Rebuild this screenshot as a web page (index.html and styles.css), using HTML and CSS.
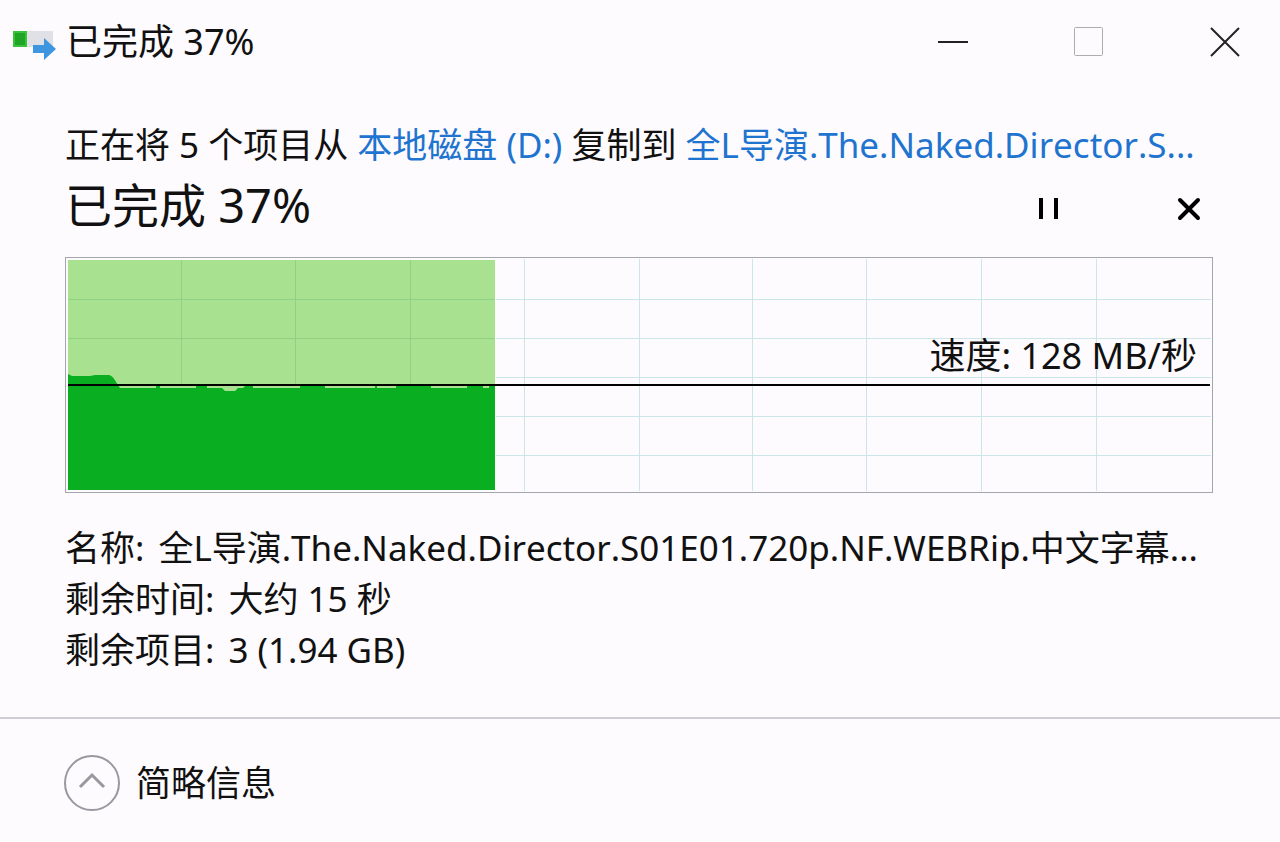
FILE: index.html
```html
<!DOCTYPE html>
<html lang="zh-CN">
<head>
  <meta charset="utf-8">
  <title>已完成 37%</title>
  <link rel="stylesheet" href="styles.css">
</head>
<body>
  <header class="titlebar">
    <svg class="app-icon" viewBox="0 0 44 32" aria-hidden="true">
      <rect x="1" y="5" width="40" height="16" fill="#dfe1e6"/>
      <rect x="1" y="5" width="14" height="16" fill="#3cc13c"/>
      <rect x="3" y="7" width="10" height="12" fill="#1fa524"/>
      <path d="M21 19h11v-7l12 11-12 11v-7H21z" fill="#3f96e0"/>
    </svg>
    <h1 class="window-title">已完成 37%</h1>
    <div class="window-buttons">
      <button class="window-button" type="button" aria-label="最小化">
        <svg viewBox="0 0 30 30"><path d="M0 15h30" stroke="#222" stroke-width="2"/></svg>
      </button>
      <button class="window-button" type="button" aria-label="最大化" disabled>
        <svg viewBox="0 0 30 30"><rect x="0.500" y="0.500" width="28" height="28" rx="1" fill="none" stroke="#adadb0"/></svg>
      </button>
      <button class="window-button" type="button" aria-label="关闭">
        <svg viewBox="0 0 30 30"><path d="M1 1l28 28M29 1L1 29" stroke="#222" stroke-width="2"/></svg>
      </button>
    </div>
  </header>

  <main class="content">
    <p class="summary">正在将 5 个项目从 <a href="#">本地磁盘 (D:)</a> 复制到 <a href="#">全L导演.The.Naked.Director.S...</a></p>

    <div class="progress-row">
      <h2 class="progress-title">已完成 37%</h2>
      <div class="progress-buttons">
        <button class="progress-button" type="button" aria-label="暂停">
          <svg viewBox="0 0 24 24"><path d="M4 1v21M19 1v21" stroke="#000" stroke-width="4"/></svg>
        </button>
        <button class="progress-button" type="button" aria-label="取消">
          <svg viewBox="0 0 24 24"><path d="M3 3l18 18M21 3L3 21" stroke="#000" stroke-width="4" stroke-linecap="round"/></svg>
        </button>
      </div>
    </div>

    <div class="chart">
      <svg class="chart-graph" viewBox="0 0 1148 236" preserveAspectRatio="none" aria-hidden="true">
        <rect x="3" y="3" width="427" height="230" fill="#a8e291"/>
        <path d="M3 42.500H430M3 81.500H430M116.500 3V128M230.500 3V128M345.500 3V128" stroke="#8fd084"/>
        <path d="M431 42.500H1146M431 81.500H1146M431 120.500H1146M431 159.500H1146M431 198.500H1146M459.500 2V234M574.500 2V234M687.500 2V234M801.500 2V234M916.500 2V234M1031.500 2V234" stroke="#cbe6e8"/>
        <path d="M3 117l4 2h18l5-1h14c4 1 6 5 9 10l2 3H91v-3h4v3H131v-3h11v3h15l3 3h10l3-3h5l3-3h7v3H235v-3h25v3H310v-3h2v3H331v-3h35v3H402v-3h16v3h6v-3h6v105H3z" fill="#09ae21"/>
        <path d="M3 128H1145" stroke="#000" stroke-width="2"/>
      </svg>
      <span class="speed">速度: 128 MB/秒</span>
    </div>

    <dl class="details">
      <div class="detail">
        <dt>名称:</dt>
        <dd>全L导演.The.Naked.Director.S01E01.720p.NF.WEBRip.中文字幕...</dd>
      </div>
      <div class="detail">
        <dt>剩余时间:</dt>
        <dd>大约 15 秒</dd>
      </div>
      <div class="detail">
        <dt>剩余项目:</dt>
        <dd>3 (1.94 GB)</dd>
      </div>
    </dl>
  </main>

  <footer class="footer">
    <button class="toggle" type="button">
      <svg class="toggle-icon" viewBox="0 0 56 56" aria-hidden="true">
        <circle cx="28" cy="28" r="27" fill="none" stroke="#98989e" stroke-width="2"/>
        <path d="M16 32l12-12 12 12" fill="none" stroke="#98989e" stroke-width="3"/>
      </svg>
      简略信息
    </button>
  </footer>
</body>
</html>
```

FILE: styles.css
```css
* {
  box-sizing: border-box;
}

body {
  margin: 0;
  min-height: 100vh;
  display: flex;
  flex-direction: column;
  background: #fdfbfe;
  color: #111;
  font-family: "Noto Sans", "Noto Sans CJK SC", sans-serif;
  font-size: 35px;
  font-kerning: none;
  line-height: 50px;
}

h1,
h2,
p,
dl,
dd {
  margin: 0;
  font-weight: normal;
}

button {
  padding: 0;
  border: none;
  background: none;
  color: inherit;
  font: inherit;
  cursor: pointer;
}

button:disabled {
  cursor: default;
}

svg {
  display: block;
}

a {
  color: #1f74cf;
  text-decoration: none;
}

.titlebar {
  display: flex;
  align-items: center;
  height: 84px;
  padding: 0 40px 0 12px;
}

.app-icon {
  width: 44px;
  height: 32px;
  margin-right: 10px;
  overflow: visible;
}

.window-title {
  font-size: 36px;
}

.window-buttons {
  display: flex;
  gap: 106px;
  margin-left: auto;
}

.window-button {
  width: 30px;
  height: 30px;
}

.content {
  padding: 36px 67px 42px 65px;
}

.summary {
  white-space: nowrap;
}

.progress-row {
  display: flex;
  align-items: center;
  justify-content: space-between;
  height: 70px;
}

.progress-title {
  font-size: 47px;
}

.progress-buttons {
  display: flex;
  gap: 116px;
  padding: 8px 12px 0 0;
}

.progress-button svg {
  width: 24px;
  height: 24px;
}

.chart {
  position: relative;
  height: 236px;
  margin: 17px 0 29px;
  outline: 1px solid #a3a7ab;
  outline-offset: -1px;
}

.chart-graph {
  width: 100%;
  height: 100%;
}

.speed {
  position: absolute;
  top: 74px;
  right: 16px;
  font-size: 36px;
}

.detail {
  display: flex;
  gap: 14px;
  line-height: 51px;
  white-space: nowrap;
}

.footer {
  flex: 1;
  padding: 36px 64px;
  border-top: 2px solid #d0ccd4;
}

.toggle {
  display: flex;
  align-items: center;
  gap: 16px;
}

.toggle-icon {
  width: 56px;
  height: 56px;
}
```
